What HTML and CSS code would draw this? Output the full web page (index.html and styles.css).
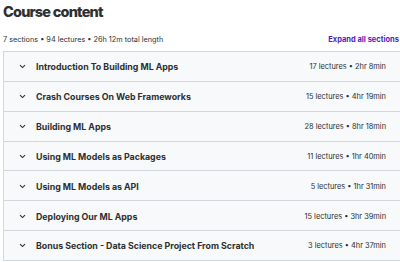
FILE: index.html
```html
<!DOCTYPE html>
<html>
<head>
<meta charset="utf-8">
<link rel="stylesheet" href="styles.css">
</head>
<body>
<div class="page">
  <h2 class="title">Course content</h2>
  <div class="summary">
    <span class="stats">7 sections • 94 lectures • 26h 12m total length</span>
    <span class="expand">Expand all sections</span>
  </div>
  <div class="sections">
    <div class="row"><span class="chev"><svg width="7" height="5" viewBox="0 0 7 5"><path d="M1 1.2 L3.5 3.6 L6 1.2" fill="none" stroke="#2d2f31" stroke-width="1.1"/></svg></span><span class="name">Introduction To Building ML Apps</span><span class="meta">17 lectures • 2hr 8min</span></div>
    <div class="row"><span class="chev"><svg width="7" height="5" viewBox="0 0 7 5"><path d="M1 1.2 L3.5 3.6 L6 1.2" fill="none" stroke="#2d2f31" stroke-width="1.1"/></svg></span><span class="name">Crash Courses On Web Frameworks</span><span class="meta">15 lectures • 4hr 19min</span></div>
    <div class="row"><span class="chev"><svg width="7" height="5" viewBox="0 0 7 5"><path d="M1 1.2 L3.5 3.6 L6 1.2" fill="none" stroke="#2d2f31" stroke-width="1.1"/></svg></span><span class="name">Building ML Apps</span><span class="meta">28 lectures • 8hr 18min</span></div>
    <div class="row"><span class="chev"><svg width="7" height="5" viewBox="0 0 7 5"><path d="M1 1.2 L3.5 3.6 L6 1.2" fill="none" stroke="#2d2f31" stroke-width="1.1"/></svg></span><span class="name">Using ML Models as Packages</span><span class="meta">11 lectures • 1hr 40min</span></div>
    <div class="row"><span class="chev"><svg width="7" height="5" viewBox="0 0 7 5"><path d="M1 1.2 L3.5 3.6 L6 1.2" fill="none" stroke="#2d2f31" stroke-width="1.1"/></svg></span><span class="name">Using ML Models as API</span><span class="meta">5 lectures • 1hr 31min</span></div>
    <div class="row"><span class="chev"><svg width="7" height="5" viewBox="0 0 7 5"><path d="M1 1.2 L3.5 3.6 L6 1.2" fill="none" stroke="#2d2f31" stroke-width="1.1"/></svg></span><span class="name">Deploying Our ML Apps</span><span class="meta">15 lectures • 3hr 39min</span></div>
    <div class="row"><span class="chev"><svg width="7" height="5" viewBox="0 0 7 5"><path d="M1 1.2 L3.5 3.6 L6 1.2" fill="none" stroke="#2d2f31" stroke-width="1.1"/></svg></span><span class="name">Bonus Section - Data Science Project From Scratch</span><span class="meta">3 lectures • 4hr 37min</span></div>
  </div>
</div>
</body>
</html>
```

FILE: styles.css
```css
html, body {
  margin: 0;
  padding: 0;
  background: #ffffff;
  overflow: hidden;
}
.page {
  width: 398px;
  padding: 0 0 0 3px;
  font-family: Inter, "Noto Sans", sans-serif;
  color: #2d2f31;
}
.title {
  margin: 0;
  padding-top: 3px;
  font-size: 14.5px;
  line-height: 18px;
  font-weight: 800;
  letter-spacing: -0.8px;
}
.summary {
  display: flex;
  justify-content: space-between;
  align-items: center;
  margin-top: 10px;
  height: 16px;
  margin-bottom: 4px;
}
.stats {
  font-size: 7.3px;
  color: #2d2f31;
}
.expand {
  font-size: 7.5px;
  font-weight: 700;
  color: #5022c3;
  margin-right: 2px;
}
.sections {
  border: 1px solid #d1d7dc;
  border-bottom: none;
}
.row {
  display: flex;
  align-items: center;
  box-sizing: border-box;
  height: 29.85px;
  background: #f7f9fa;
  border-bottom: 1px solid #d1d7dc;
  padding: 1px 14px 0 15px;
}
.chev {
  display: flex;
  width: 17px;
}
.name {
  flex: 1;
  font-size: 8.8px;
  font-weight: 700;
  color: #2d2f31;
}
.meta {
  font-size: 7.4px;
  color: #2d2f31;
}
```
